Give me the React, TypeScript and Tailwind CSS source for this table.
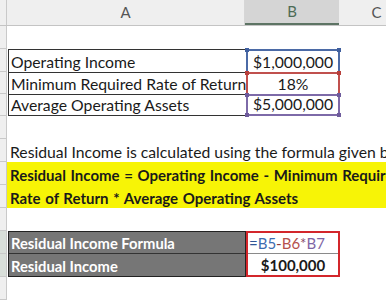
import React from "react";

const ROW = "h-[23px]";

function Stub({ shade = false }: { shade?: boolean }) {
  return (
    <div
      className={`w-[7px] shrink-0 border-r border-b border-[#c9c9c9] ${shade ? "bg-[#d9dfda]" : "bg-[#efefef]"}`}
    />
  );
}

function Handle({ pos, color }: { pos: string; color: string }) {
  return <span className={`absolute w-[4px] h-[4px] z-10 ${pos} ${color}`} />;
}

export default function App() {
  return (
    <div className="w-[386px] h-[300px] bg-white overflow-hidden font-['Lato',sans-serif] text-[15.75px] text-[#1a1a1a]">
      {/* column headers */}
      <div className="flex h-[26px] bg-[#efefef] border-b border-[#c4c4c4] text-[#555] text-[15px]">
        <div className="w-[7px] shrink-0 border-r border-[#c9c9c9]" />
        <div className="w-[238px] shrink-0 flex items-center justify-center border-r border-[#d6d6d6]">A</div>
        <div className="w-[94px] shrink-0 flex items-center justify-center bg-[#d5d5d5] border-b-2 border-[#5d7464] text-[#4d6b55]">
          B
        </div>
        <div className="flex-1 flex items-center justify-center pl-[28px]">C</div>
      </div>

      {/* row 1 */}
      <div className={`flex ${ROW}`}>
        <Stub />
      </div>

      {/* input table */}
      {[
        { label: "Operating Income", value: "$1,000,000", border: "border-[#4b6aa6]", handle: "bg-[#3f5f9e]" },
        { label: "Minimum Required Rate of Return", value: "18%", border: "border-[#c0504d]", handle: "bg-[#b8403c]" },
        { label: "Average Operating Assets", value: "$5,000,000", border: "border-[#7d6aa8]", handle: "bg-[#6e5b9c]" },
      ].map((r, i) => (
        <div key={r.label} className={`flex ${i === 0 ? ROW : "h-[22px]"}`}>
          <Stub />
          <div className={`w-[238px] shrink-0 ml-[1px] border-l border-t border-[#333] ${i === 2 ? "border-b" : ""} flex items-end pb-[1px] pl-[2px] leading-[18px] whitespace-nowrap`}>
            {r.label}
          </div>
          <div className={`relative w-[94px] shrink-0 border-l-2 border-r-2 border-t-2 ${r.border} ${i === 2 ? "border-b-2" : ""} flex items-end justify-center pb-[1px] leading-[18px]`}>
            <Handle pos="-top-[3px] -left-[3px]" color={r.handle} />
            <Handle pos="-top-[3px] -right-[3px]" color={r.handle} />
            {i === 2 && <Handle pos="-bottom-[3px] -left-[3px]" color={r.handle} />}
            {i === 2 && <Handle pos="-bottom-[3px] -right-[3px]" color={r.handle} />}
            {r.value}
          </div>
        </div>
      ))}

      {/* row 5 */}
      <div className={`flex ${ROW}`}>
        <Stub />
      </div>

      {/* row 6 */}
      <div className={`flex ${ROW}`}>
        <Stub />
        <div className="flex-1 flex items-end pb-[1px] pl-[3px] leading-[18px] whitespace-nowrap overflow-hidden">
          Residual Income is calculated using the formula given below
        </div>
      </div>

      {/* rows 7-8 highlighted formula */}
      {["Residual Income = Operating Income - Minimum Required", "Rate of Return * Average Operating Assets"].map((t) => (
        <div key={t} className={`flex ${ROW}`}>
          <Stub />
          <div className="flex-1 flex items-end pb-[1px] pl-[3px] leading-[18px] whitespace-nowrap overflow-hidden bg-[#f7f406] font-bold text-[15px] [word-spacing:1px]">
            {t}
          </div>
        </div>
      ))}

      {/* row 9 */}
      <div className={`flex ${ROW}`}>
        <Stub />
      </div>

      {/* rows 10-11 result */}
      <div className="flex">
        <div className="flex flex-col shrink-0">
          <div className={`flex ${ROW}`}><Stub shade /></div>
          <div className={`flex ${ROW}`}><Stub shade /></div>
        </div>
        <div className="w-[238px] shrink-0 ml-[1px] flex flex-col border border-[#222] bg-[#767676] text-white font-bold text-[14.75px]">
          <div className="h-[22px] flex items-end pb-[1px] pl-[2px] leading-[18px] border-b border-[#333] whitespace-nowrap">
            Residual Income Formula
          </div>
          <div className="h-[22px] flex items-end pb-[1px] pl-[2px] leading-[18px] whitespace-nowrap">Residual Income</div>
        </div>
        <div className="w-[94px] shrink-0 flex flex-col border-2 border-[#d3262b]">
          <div className="h-[21px] flex items-end pb-[1px] pl-[1px] leading-[18px] border-b border-[#8a8a8a] whitespace-nowrap text-[15px]">
            <span className="text-[#2f5597]">=</span>
            <span className="text-[#3e6cb0]">B5</span>
            <span className="text-[#8a3b3b]">-</span>
            <span className="text-[#b5514c]">B6</span>
            <span className="text-[#8a4a6a]">*</span>
            <span className="text-[#7e65a5]">B7</span>
          </div>
          <div className="h-[21px] flex items-end justify-center pb-[1px] leading-[18px] font-bold text-[15px]">$100,000</div>
        </div>
      </div>

      {/* row 12 */}
      <div className={`flex ${ROW}`}>
        <Stub />
      </div>
    </div>
  );
}
